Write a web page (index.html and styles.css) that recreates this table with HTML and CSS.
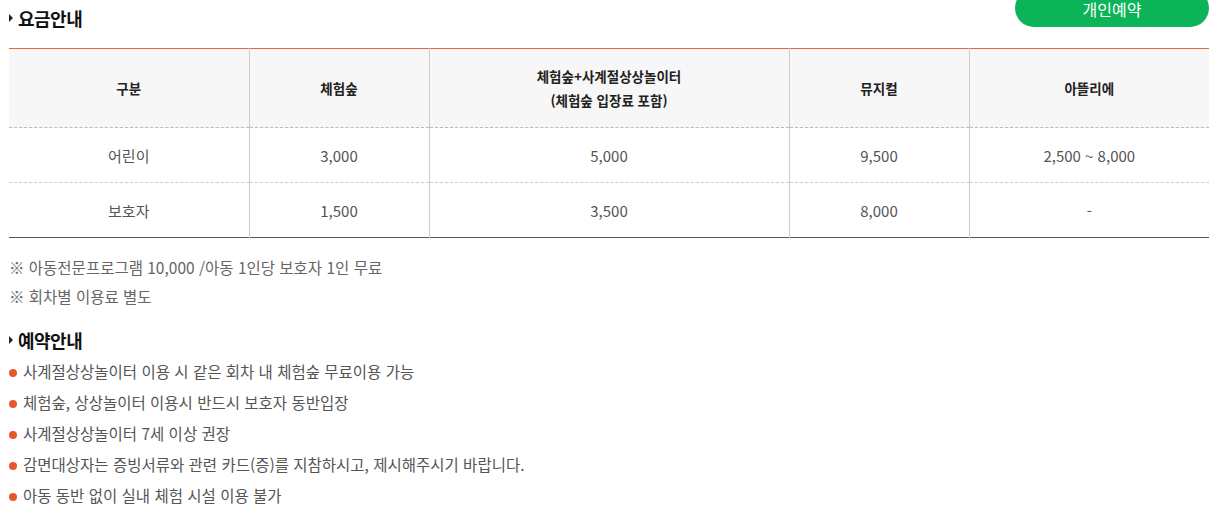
FILE: index.html
```html
<!DOCTYPE html>
<html lang="ko">
<head>
<meta charset="utf-8">
<title>요금안내</title>
<link rel="stylesheet" href="styles.css">
</head>
<body>
<div class="wrap">
  <div class="top">
    <h3 class="tit">요금안내</h3>
    <a class="btn-res" href="#"><span>개인예약</span></a>
  </div>
  <table class="price">
    <colgroup>
      <col class="c1"><col class="c2"><col class="c3"><col class="c4"><col class="c5">
    </colgroup>
    <thead>
      <tr>
        <th>구분</th>
        <th>체험숲</th>
        <th>체험숲+사계절상상놀이터<br>(체험숲 입장료 포함)</th>
        <th>뮤지컬</th>
        <th>아뜰리에</th>
      </tr>
    </thead>
    <tbody>
      <tr>
        <td>어린이</td><td>3,000</td><td>5,000</td><td>9,500</td><td>2,500 ~ 8,000</td>
      </tr>
      <tr>
        <td>보호자</td><td>1,500</td><td>3,500</td><td>8,000</td><td>-</td>
      </tr>
    </tbody>
  </table>
  <p class="note">※ 아동전문프로그램 10,000 /아동 1인당 보호자 1인 무료</p>
  <p class="note">※ 회차별 이용료 별도</p>
  <h3 class="tit tit2">예약안내</h3>
  <ul class="dots">
    <li>사계절상상놀이터 이용 시 같은 회차 내 체험숲 무료이용 가능</li>
    <li>체험숲, 상상놀이터 이용시 반드시 보호자 동반입장</li>
    <li>사계절상상놀이터 7세 이상 권장</li>
    <li>감면대상자는 증빙서류와 관련 카드(증)를 지참하시고, 제시해주시기 바랍니다.</li>
    <li>아동 동반 없이 실내 체험 시설 이용 불가</li>
  </ul>
</div>
</body>
</html>
```

FILE: styles.css
```css
* { box-sizing: border-box; }
html, body { margin: 0; padding: 0; background: #fff; }
body {
  font-family: "Noto Sans CJK KR", "Noto Sans", sans-serif;
  color: #555;
  overflow: hidden;
}
.wrap { width: 1200px; margin-left: 9px; }

.top {
  display: flex;
  justify-content: space-between;
  align-items: flex-start;
  height: 48px;
}
.tit {
  position: relative;
  margin: 6px 0 0;
  padding-left: 9px;
  font-size: 18px;
  line-height: 24px;
  font-weight: 700;
  color: #111;
  letter-spacing: -0.5px;
}
.tit::before {
  content: "";
  position: absolute;
  left: 0;
  top: 8px;
  border-left: 4px solid #222;
  border-top: 4px solid transparent;
  border-bottom: 4px solid transparent;
}
.btn-res {
  display: flex;
  align-items: center;
  justify-content: center;
  width: 194px;
  height: 38px;
  margin-top: -11px;
  border-radius: 19px;
  background: #0bb458;
  color: #fff;
  font-size: 16px;
  line-height: 16px;
  text-decoration: none;
  padding-top: 2px;
}

.price {
  width: 1200px;
  border-collapse: collapse;
  table-layout: fixed;
  border-top: 1px solid #e06a45;
  border-bottom: 1px solid #555;
}
.c1, .c5 { width: 240px; }
.c2, .c4 { width: 180px; }
.c3 { width: 360px; }
.price th, .price td {
  text-align: center;
  border-left: 1px solid #ccc;
  padding: 0;
}
.price th:first-child, .price td:first-child { border-left: 0; }
.price th {
  background: #f7f7f7;
  height: 79px;
  font-size: 13.5px;
  line-height: 24px;
  font-weight: 700;
  color: #222;
  border-bottom: 1px dashed #bbb;
}
.price td {
  height: 55px;
  font-size: 15px;
  color: #555;
}
.price tbody tr:first-child td { border-bottom: 1px dashed #ccc; }

.note {
  margin: 0;
  font-size: 15.5px;
  line-height: 29px;
  color: #666;
}
.note:first-of-type { margin-top: 15px; }

.tit2 { margin-top: 17px; }

.dots {
  list-style: none;
  margin: 4px 0 0;
  padding: 0;
}
.dots li {
  position: relative;
  padding-left: 14px;
  font-size: 15.5px;
  line-height: 31px;
  color: #555;
}
.dots li::before {
  content: "";
  position: absolute;
  left: 0;
  top: 13px;
  width: 8px;
  height: 8px;
  border-radius: 50%;
  background: #e8572c;
}
```
